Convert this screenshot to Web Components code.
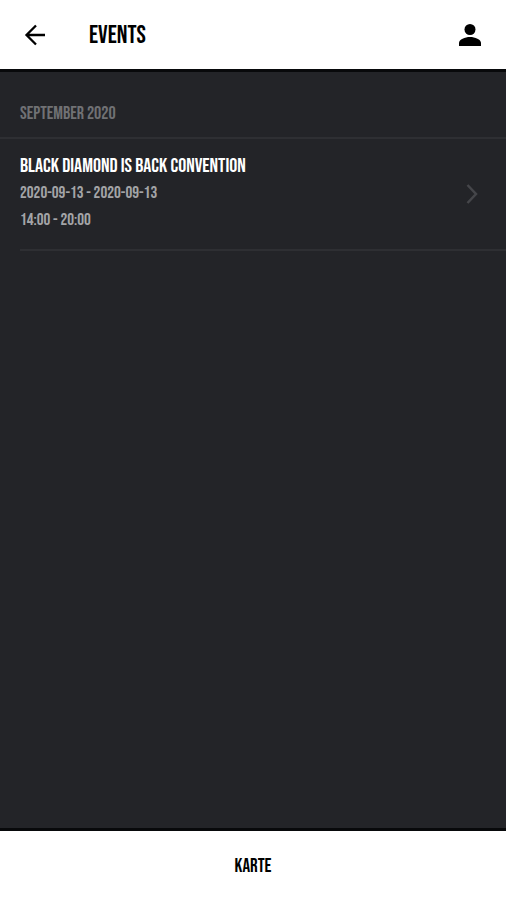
<!DOCTYPE html>
<html lang="de">
<head>
<meta charset="utf-8">
<meta name="viewport" content="width=device-width, initial-scale=1">
<title>Events</title>
<style>
  html, body { height: 100%; margin: 0; }
  body { font-family: "Bebas Neue", "Liberation Sans Narrow", "Liberation Sans", sans-serif; background: #232428; }
</style>
</head>
<body>
<events-screen></events-screen>
<script>
const define = (name, html) => customElements.define(name, class extends HTMLElement {
  constructor() {
    super();
    this.attachShadow({ mode: 'open' }).innerHTML = html;
  }
});

define('app-header', `
  <style>
    :host { display: block; background: #fff; color: #000; border-bottom: 3px solid #08090b; }
    header { display: flex; align-items: center; height: 69px; padding: 0 22px; box-sizing: border-box; }
    button { display: flex; padding: 0; border: 0; background: none; color: inherit; cursor: pointer; }
    h1 { flex: 1; margin: 0 0 0 41px; padding-top: 2px; font-size: 25px; line-height: 24px; font-weight: 400; }
    svg { display: block; fill: currentColor; }
  </style>
  <header>
    <button type="button" aria-label="Zurück">
      <svg width="26" height="30" viewBox="0 0 26 30"><path d="M14 5.500 4.500 15l9.500 9.500M4.500 15H23" fill="none" stroke="currentColor" stroke-width="2.300"/></svg>
    </button>
    <h1><slot></slot></h1>
    <button type="button" aria-label="Profil">
      <svg width="28" height="30" viewBox="0 0 28 30"><circle cx="14" cy="9.500" r="5.500"/><path d="M3 26v-3c0-3.600 6-6 11-6s11 2.400 11 6v3z"/></svg>
    </button>
  </header>`);

define('month-heading', `
  <style>
    :host { display: block; border-bottom: 2px solid #2e2f33; }
    h2 { margin: 0; padding: 30px 20px 11px; font-size: 18px; line-height: 24px; font-weight: 400; color: #707174; }
  </style>
  <h2><slot></slot></h2>`);

define('event-item', `
  <style>
    :host { display: block; padding-left: 20px; }
    a { display: flex; align-items: center; padding: 14px 27px 15px 0; border-bottom: 2px solid #2e2f33; color: #a3a4a7; text-decoration: none; }
    div { flex: 1; font-size: 17px; line-height: 27px; }
    h3 { margin: 0; font-size: 20px; line-height: 27px; font-weight: 400; color: #fff; }
    svg { display: block; }
  </style>
  <a href="#event">
    <div><h3><slot name="title"></slot></h3><slot name="date"></slot><slot name="time"></slot></div>
    <svg width="14" height="22" viewBox="0 0 14 22" fill="none" stroke="#45464a" stroke-width="2.500"><path d="m2.500 2 8.500 9-8.500 9"/></svg>
  </a>`);

define('bottom-bar', `
  <style>
    :host { display: block; border-top: 3px solid #08090b; background: #fff; }
    button { display: block; width: 100%; height: 69px; padding: 2px 0 0; border: 0; background: none; color: #000; font: 400 19px/24px "Bebas Neue", "Liberation Sans Narrow", "Liberation Sans", sans-serif; cursor: pointer; }
  </style>
  <button type="button"><slot></slot></button>`);

define('events-screen', `
  <style>
    :host { display: flex; flex-direction: column; min-height: 100%; background: #232428; }
    main { flex: 1; }
    [slot] { display: block; }
  </style>
  <app-header>EVENTS</app-header>
  <main>
    <month-heading>SEPTEMBER 2020</month-heading>
    <event-item>
      <span slot="title">BLACK DIAMOND IS BACK CONVENTION</span>
      <span slot="date">2020-09-13 - 2020-09-13</span>
      <span slot="time">14:00 - 20:00</span>
    </event-item>
  </main>
  <bottom-bar>KARTE</bottom-bar>`);
</script>
</body>
</html>
